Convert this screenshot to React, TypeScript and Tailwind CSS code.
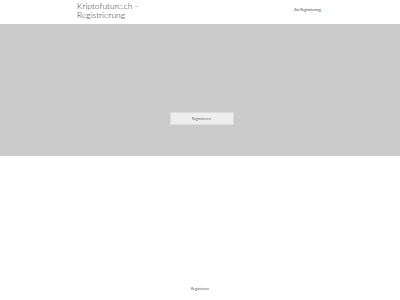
export default function App() {
  return (
    <div className="w-[400px] h-[300px] bg-white flex flex-col font-['Lato','Liberation_Sans',sans-serif] text-[#333]">
      {/* Header */}
      <header className="h-[24px] flex justify-center">
        <div className="w-[246px] flex items-start justify-between">
          <h1 className="pt-[2px] text-[8.5px] leading-[9px] font-light text-[#333]">
            Kriptofuture.ch -<br />Registrierung
          </h1>
          <a className="pt-[8px] pr-[2px] text-[3.6px] leading-[4px] text-[#444]">Zur Registrierung</a>
        </div>
      </header>
      {/* Hero */}
      <section className="h-[132px] bg-[#cbcbcb] flex flex-col items-center">
        <button className="mt-[88px] ml-[3px] w-[64px] h-[13px] bg-[#eeeeee] border border-[#dcdcdc] text-[3.6px] text-[#666] flex items-center justify-center">
          Registrieren
        </button>
      </section>
      {/* Footer */}
      <div className="flex-1 flex flex-col justify-end items-center pb-[8px]">
        <span className="text-[3.4px] text-[#555]">Registrieren</span>
      </div>
    </div>
  );
}
